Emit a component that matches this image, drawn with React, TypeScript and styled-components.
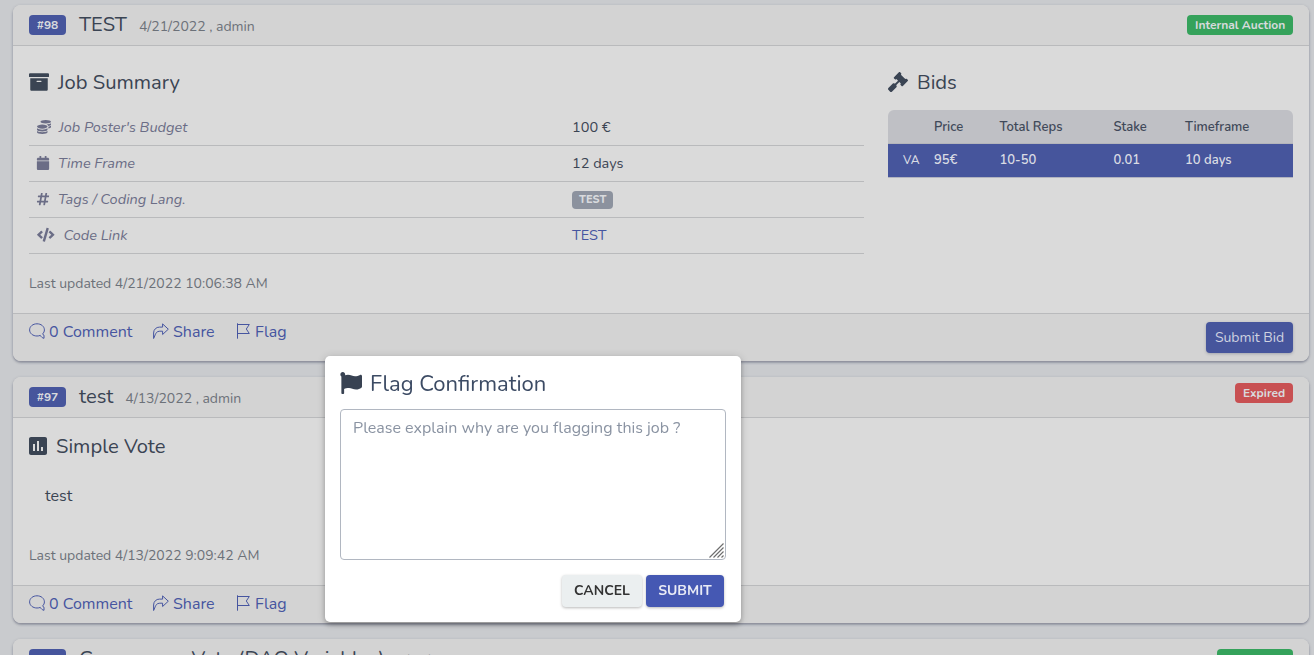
import React from "react";
import styled, { createGlobalStyle } from "styled-components";
import { FaArchive, FaCoins, FaCalendar, FaHashtag, FaCode, FaFlag, FaGavel } from "react-icons/fa";
import { MdAssessment } from "react-icons/md";

const GlobalStyle = createGlobalStyle`
  *, *::before, *::after { box-sizing: border-box; }
  html, body { margin: 0; height: 655px; overflow: hidden; }
  body {
    background: #c9cbce;
    color: #3a4453;
    font-family: Nunito, "Open Sans", sans-serif;
    font-size: 16px;
    line-height: 24px;
  }
`;

const Page = styled.main`
  display: flex;
  flex-direction: column;
  gap: 16px;
  padding: 5px 5px 0 13px;
  height: 655px;
  overflow: hidden;
`;

const Card = styled.article`
  flex: none;
  width: 1296px;
  background: #dadada;
  border-radius: 8px;
  overflow: hidden;
  box-shadow: 0 2px 2px rgba(60, 65, 90, 0.22), 0 1px 3px rgba(60, 65, 90, 0.35);
`;

const CardHeader = styled.header`
  display: flex;
  align-items: flex-start;
  height: 41px;
  padding: 10px 16px 0;
  background: #d3d3d3;
  border-bottom: 1px solid #b9babc;
`;

type Tone = "blue" | "green" | "red" | "gray";
const tones: Record<Tone, string> = {
  blue: "#46559c",
  green: "#35a25b",
  red: "#c85052",
  gray: "#8c929e",
};

const Badge = styled.span<{ $tone: Tone }>`
  display: inline-block;
  height: 20px;
  padding: 0 7.8px;
  border-radius: 4px;
  background: ${(p) => tones[p.$tone]};
  color: #d8dadd;
  font-size: 12px;
  font-weight: 700;
  line-height: 20px;
  white-space: nowrap;
`;

const StatusBadge = styled(Badge)<{ $raised?: boolean }>`
  margin-top: ${(p) => (p.$raised ? -4 : 0)}px;
`;

const IdBadge = styled(Badge)`
  width: 37px;
  padding: 0;
  text-align: center;
`;

const SmallBadge = styled(Badge)`
  height: 18px;
  margin-top: 4px;
  padding: 0 7px;
  font-size: 11px;
  font-weight: 800;
  line-height: 17px;
  vertical-align: top;
`;

const JobTitle = styled.h2`
  margin: -2px 0 0 13px;
  font-size: 20.15px;
  font-weight: 400;
  line-height: 24px;
  white-space: nowrap;
`;

const Meta = styled.span`
  flex: 1;
  margin: 1px 0 0 12px;
  color: #6c7179;
  font-size: 14px;
  line-height: 22px;
`;

const Body = styled.div<{ $height: number }>`
  display: flex;
  gap: 24px;
  height: ${(p) => p.$height}px;
  padding: 0 16px;
`;

const Summary = styled.section`
  width: 835px;
`;

const BidsPanel = styled.section`
  width: 405px;
`;

const SectionTitle = styled.h3<{ $top: number; $gap: number }>`
  display: flex;
  align-items: center;
  gap: ${(p) => p.$gap}px;
  height: 24px;
  margin: ${(p) => p.$top}px 0 0;
  font-size: 20.2px;
  font-weight: 400;
  line-height: 24px;
  svg { flex: none; margin-top: -3px; }
`;

const VoteIcon = styled(MdAssessment)`
  margin: -2px -3px 0;
`;

const Details = styled.dl`
  margin: 15px 0 0;
  font-size: 14.5px;
`;

const DetailRow = styled.div`
  display: grid;
  grid-template-columns: 543px 1fr;
  height: 36px;
  padding-top: 5px;
  border-bottom: 1px solid #b9babc;
`;

const Label = styled.dt<{ $gap: number; $indent?: number }>`
  display: flex;
  align-items: center;
  gap: ${(p) => p.$gap}px;
  height: 24px;
  padding-left: ${(p) => p.$indent ?? 8}px;
  color: #6b6d86;
  font-style: italic;
  svg { flex: none; margin-top: -1px; }
`;

const Value = styled.dd`
  margin: 0;
`;

const Link = styled.a`
  color: #4655a0;
`;

const Description = styled.p`
  margin: 25px 16px 0;
  font-size: 16px;
`;

const Updated = styled.p<{ $top: number }>`
  margin: ${(p) => p.$top}px 0 0;
  color: #6c7179;
  font-size: 14px;
`;

const BidTable = styled.div`
  margin-top: 15px;
  border-radius: 6px 6px 0 0;
  overflow: hidden;
  font-size: 13px;
`;

const BidRow = styled.div<{ $head?: boolean }>`
  display: grid;
  grid-template-columns: 46px 65.5px 114px 71.5px 1fr;
  height: 34px;
  border-bottom: 1px solid ${(p) => (p.$head ? "#b4b5bb" : "#b1b3bf")};
  background: ${(p) => (p.$head ? "#bfc0c5" : "#46559c")};
  color: ${(p) => (p.$head ? "#3f4959" : "#d9dbe3")};
  font-weight: 600;
  line-height: ${(p) => (p.$head ? 35 : 33)}px;
`;

const Bidder = styled.span`
  padding-left: 15px;
  font-size: 12px;
  font-weight: 500;
`;

const CardFooter = styled.footer<{ $height: number }>`
  display: flex;
  align-items: flex-start;
  height: ${(p) => p.$height}px;
  padding: 6px 16px 0;
  background: #d3d3d3;
  border-top: 1px solid #b9babc;
`;

const Action = styled.a<{ $width: number }>`
  display: flex;
  align-items: center;
  gap: 4px;
  width: ${(p) => p.$width}px;
  color: #4655a0;
  white-space: nowrap;
  svg { flex: none; margin-top: -2px; }
`;

const SubmitBid = styled.button`
  width: 87px;
  height: 31px;
  margin: 2px 0 0 auto;
  padding: 0;
  border: 0;
  border-radius: 4px;
  background: #46559c;
  box-shadow: 0 1px 3px rgba(50, 55, 90, 0.3);
  color: #cfd2e0;
  font: 400 14px/31px Nunito, "Open Sans", sans-serif;
`;

const Dialog = styled.div`
  position: fixed;
  top: 356px;
  left: 325px;
  width: 416px;
  height: 266px;
  padding: 15px;
  border-radius: 5px;
  background: #fff;
  box-shadow: 0 3px 5px rgba(0, 0, 0, 0.22), 0 1px 8px rgba(0, 0, 0, 0.16);
`;

const DialogTitle = styled.h1`
  display: flex;
  align-items: center;
  gap: 8px;
  height: 26px;
  margin: 0 0 12px;
  color: #3c4b64;
  font-size: 22px;
  font-weight: 400;
  line-height: 26px;
  svg { flex: none; margin-top: -3px; color: #384252; }
`;

const ReasonField = styled.div`
  position: relative;
`;

const Reason = styled.textarea`
  display: block;
  width: 386px;
  height: 151px;
  padding: 6px 12px;
  border: 1px solid #b1b7c1;
  border-radius: 4px;
  outline: 0;
  resize: none;
  color: #3c4b64;
  font: 400 16px/24px Nunito, "Open Sans", sans-serif;
  &::placeholder { color: #8a93a2; opacity: 1; }
`;

const Grip = styled.svg`
  position: absolute;
  right: 2px;
  bottom: 2px;
  width: 15px;
  height: 15px;
  stroke: #6e6e6e;
  stroke-width: 1.2;
`;

const DialogActions = styled.div`
  display: flex;
  justify-content: flex-end;
  gap: 4px;
  padding: 15px 2px 0 0;
`;

const DialogButton = styled.button<{ $primary?: boolean }>`
  width: ${(p) => (p.$primary ? 78 : 80)}px;
  height: 32px;
  padding: 0;
  border: 0;
  border-radius: 4px;
  background: ${(p) => (p.$primary ? "#4558b3" : "#ebeff0")};
  box-shadow: 0 1px 3px rgba(0, 0, 0, 0.28);
  color: ${(p) => (p.$primary ? "#e8eaf5" : "#333")};
  font: 750 14px/30px Nunito, "Open Sans", sans-serif;
`;

const lineIcon = {
  width: 16,
  height: 16,
  viewBox: "0 0 16 16",
  fill: "none",
  stroke: "currentColor",
  strokeWidth: 1,
};

const CommentIcon = () => (
  <svg {...lineIcon}>
    <path d="M15 15.300V12.200C14.300 12 13.800 11.500 13.600 10.900 14.800 9.800 15.400 8.400 15.400 6.900 15.400 3.400 12.100.8 8 .8S.6 3.400.6 6.900 3.900 13 8 13C9.200 13 10.300 12.800 11.300 12.400 12 13.800 13.300 14.900 15 15.300Z" />
  </svg>
);

const ShareIcon = () => (
  <svg {...lineIcon}>
    <path d="M.6 15.500V10C.6 6.500 3.200 4.100 6.500 4.100H9.600V.9L15.300 6.200 9.600 11.500V8.200H6.800C3.500 8.200 2.800 10.500 2.200 11.800L.6 15.500Z" />
  </svg>
);

const FlagIcon = () => (
  <svg {...lineIcon}>
    <path d="M2.500 .3V15.700M2.500 1.500H14.300L11.300 6 14.300 10.500H2.500" />
  </svg>
);

function Actions() {
  return (
    <>
      <Action $width={124}><CommentIcon />0 Comment</Action>
      <Action $width={82}><ShareIcon />Share</Action>
      <Action $width={52}><FlagIcon />Flag</Action>
    </>
  );
}

type HeaderProps = {
  id: string;
  title: string;
  meta: string;
  status: string;
  tone: Tone;
  raised?: boolean;
};

function Header({ id, title, meta, status, tone, raised }: HeaderProps) {
  return (
    <CardHeader>
      <IdBadge $tone="blue">#{id}</IdBadge>
      <JobTitle>{title}</JobTitle>
      <Meta>{meta}</Meta>
      <StatusBadge $tone={tone} $raised={raised}>{status}</StatusBadge>
    </CardHeader>
  );
}

export default function App() {
  return (
    <>
      <GlobalStyle />
      <Page>
        <Card>
          <Header id="98" title="TEST" meta="4/21/2022 , admin" status="Internal Auction" tone="green" />
          <Body $height={267}>
            <Summary>
              <SectionTitle $top={25} $gap={9}><FaArchive size={20} />Job Summary</SectionTitle>
              <Details>
                <DetailRow>
                  <Label $gap={8}><FaCoins size={14} />Job Poster's Budget</Label>
                  <Value>100 €</Value>
                </DetailRow>
                <DetailRow>
                  <Label $gap={8} $indent={7}><FaCalendar size={14} />Time Frame</Label>
                  <Value>12 days</Value>
                </DetailRow>
                <DetailRow>
                  <Label $gap={8} $indent={7}><FaHashtag size={14} />Tags / Coding Lang.</Label>
                  <Value><SmallBadge $tone="gray">TEST</SmallBadge></Value>
                </DetailRow>
                <DetailRow>
                  <Label $gap={9}><FaCode size={17.5} />Code Link</Label>
                  <Value><Link>TEST</Link></Value>
                </DetailRow>
              </Details>
              <Updated $top={18}>Last updated 4/21/2022 10:06:38 AM</Updated>
            </Summary>
            <BidsPanel>
              <SectionTitle $top={25} $gap={9}><FaGavel size={20} />Bids</SectionTitle>
              <BidTable>
                <BidRow $head>
                  <span /><span>Price</span><span>Total Reps</span><span>Stake</span><span>Timeframe</span>
                </BidRow>
                <BidRow>
                  <Bidder>VA</Bidder><span>95€</span><span>10-50</span><span>0.01</span><span>10 days</span>
                </BidRow>
              </BidTable>
            </BidsPanel>
          </Body>
          <CardFooter $height={48}>
            <Actions />
            <SubmitBid>Submit Bid</SubmitBid>
          </CardFooter>
        </Card>
        <Card>
          <Header id="97" title="test" meta="4/13/2022 , admin" status="Expired" tone="red" raised />
          <Body $height={167}>
            <Summary>
              <SectionTitle $top={17} $gap={9}><VoteIcon size={24} />Simple Vote</SectionTitle>
              <Description>test</Description>
              <Updated $top={36}>Last updated 4/13/2022 9:09:42 AM</Updated>
            </Summary>
          </Body>
          <CardFooter $height={38}>
            <Actions />
          </CardFooter>
        </Card>
        <Card>
          <Header id="96" title="Governance Vote (DAO Variables)" meta="4/13/2022 , admin" status="Completed" tone="green" />
          <Body $height={60} />
        </Card>
      </Page>
      <Dialog role="dialog">
        <DialogTitle><FaFlag size={22} />Flag Confirmation</DialogTitle>
        <ReasonField>
          <Reason placeholder="Please explain why are you flagging this job ?" />
          <Grip viewBox="0 0 15 15">
            <path d="M.5 14.500 14.500 .5M4.500 14.500 14.500 4.500M8.500 14.500 14.500 8.500M12.500 14.500 14.500 12.500" />
          </Grip>
        </ReasonField>
        <DialogActions>
          <DialogButton>CANCEL</DialogButton>
          <DialogButton $primary>SUBMIT</DialogButton>
        </DialogActions>
      </Dialog>
    </>
  );
}
